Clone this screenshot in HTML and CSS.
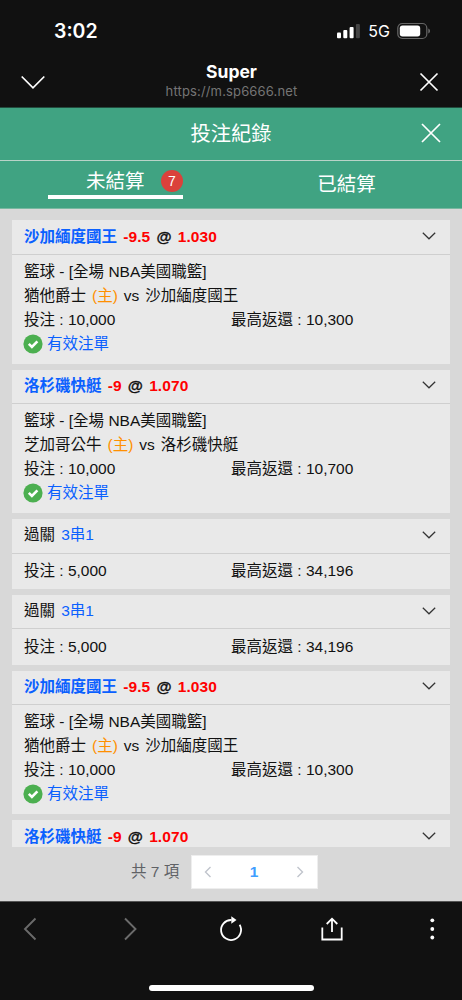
FILE: index.html
```html
<!DOCTYPE html>
<html lang="zh-Hant">
<head>
<meta charset="utf-8">
<title>投注紀錄</title>
<link rel="stylesheet" href="styles.css">
</head>
<body>
<svg class="defs" width="0" height="0">
  <symbol id="chev" viewBox="0 0 14 8"><path d="M.8.8 7 6.8 13.2.8" fill="none" stroke="#333" stroke-width="1.2"/></symbol>
  <symbol id="check" viewBox="0 0 20 20"><circle cx="10" cy="10" r="9.6" fill="#4caf50"/><path d="M5.8 9.9 8.9 13 14.4 7.4" fill="none" stroke="#fff" stroke-width="2.6"/></symbol>
</svg>
<div class="phone">
  <div class="status">
    <span class="clock">3:02</span>
    <div class="signals">
      <svg width="24" height="16" viewBox="0 0 24 16"><g fill="#fff"><rect x="0" y="9.5" width="4" height="5.8" rx="1"/><rect x="6.3" y="7" width="4" height="8.3" rx="1"/><rect x="12.6" y="4" width="4" height="11.3" rx="1"/></g><rect x="18.9" y="1" width="4" height="14.3" rx="1" fill="#444"/></svg>
      <span class="net">5G</span>
      <svg width="34" height="18" viewBox="0 0 34 18"><rect x=".8" y="1.5" width="29" height="15" rx="4.5" fill="none" stroke="#666" stroke-width="1.2"/><rect x="2.8" y="3.5" width="20.4" height="11" rx="2.7" fill="#fff"/><path d="M31.4 6.4v5c2-.7 2-4.3 0-5" fill="#777"/></svg>
    </div>
  </div>
  <div class="browser">
    <svg width="26" height="16" viewBox="0 0 26 16"><path d="M1.7 1.5 13 12.8 24.3 1.5" fill="none" stroke="#fff" stroke-width="1.7"/></svg>
    <div class="site"><div class="site-name">Super</div><div class="url">https://m.sp6666.net</div></div>
    <svg width="20" height="20" viewBox="0 0 20 20"><path d="M1.5 1.5l17 17m0-17-17 17" stroke="#fff" stroke-width="1.7"/></svg>
  </div>
  <div class="title"><h1>投注紀錄</h1><svg width="20" height="20" viewBox="0 0 20 20"><path d="M1 1l18 18M19 1 1 19" stroke="#fff" stroke-width="1.7"/></svg></div>
  <div class="tabs">
    <div class="tab"><div class="active"><span>未結算</span><span class="badge">7</span></div></div>
    <div class="tab settled">已結算</div>
  </div>
  <div class="list">
    <div class="card">
      <div class="head"><div class="pick"><b class="team">沙加緬度國王</b><b class="odds">-9.5</b><b class="at">@</b><b class="odds">1.030</b></div><svg class="chev"><use href="#chev"/></svg></div>
      <div class="body"><div>籃球 - [全場 NBA美國職籃]</div><div class="match"><span>猶他爵士</span><span class="home">(主)</span><span>vs</span><span>沙加緬度國王</span></div><div class="money"><span>投注 : 10,000</span><span>最高返還 : 10,300</span></div><div class="valid"><svg class="check"><use href="#check"/></svg>有效注單</div></div>
    </div>
    <div class="card">
      <div class="head"><div class="pick"><b class="team">洛杉磯快艇</b><b class="odds">-9</b><b class="at">@</b><b class="odds">1.070</b></div><svg class="chev"><use href="#chev"/></svg></div>
      <div class="body"><div>籃球 - [全場 NBA美國職籃]</div><div class="match"><span>芝加哥公牛</span><span class="home">(主)</span><span>vs</span><span>洛杉磯快艇</span></div><div class="money"><span>投注 : 10,000</span><span>最高返還 : 10,700</span></div><div class="valid"><svg class="check"><use href="#check"/></svg>有效注單</div></div>
    </div>
    <div class="card parlay">
      <div class="head"><div class="pick"><span>過關</span><span class="combo">3串1</span></div><svg class="chev"><use href="#chev"/></svg></div>
      <div class="body"><div class="money"><span>投注 : 5,000</span><span>最高返還 : 34,196</span></div></div>
    </div>
    <div class="card parlay">
      <div class="head"><div class="pick"><span>過關</span><span class="combo">3串1</span></div><svg class="chev"><use href="#chev"/></svg></div>
      <div class="body"><div class="money"><span>投注 : 5,000</span><span>最高返還 : 34,196</span></div></div>
    </div>
    <div class="card">
      <div class="head"><div class="pick"><b class="team">沙加緬度國王</b><b class="odds">-9.5</b><b class="at">@</b><b class="odds">1.030</b></div><svg class="chev"><use href="#chev"/></svg></div>
      <div class="body"><div>籃球 - [全場 NBA美國職籃]</div><div class="match"><span>猶他爵士</span><span class="home">(主)</span><span>vs</span><span>沙加緬度國王</span></div><div class="money"><span>投注 : 10,000</span><span>最高返還 : 10,300</span></div><div class="valid"><svg class="check"><use href="#check"/></svg>有效注單</div></div>
    </div>
    <div class="card last">
      <div class="head"><div class="pick"><b class="team">洛杉磯快艇</b><b class="odds">-9</b><b class="at">@</b><b class="odds">1.070</b></div><svg class="chev"><use href="#chev"/></svg></div>
    </div>
  </div>
  <div class="pager">
    <span class="total">共 7 項</span>
    <div class="pages">
      <svg width="8" height="12" viewBox="0 0 8 12"><path d="M6.5 1 1.5 6l5 5" fill="none" stroke="#c0c4cc" stroke-width="1.4"/></svg>
      <b>1</b>
      <svg width="8" height="12" viewBox="0 0 8 12"><path d="M1.5 1l5 5-5 5" fill="none" stroke="#c0c4cc" stroke-width="1.4"/></svg>
    </div>
  </div>
  <div class="toolbar">
    <div class="tools">
      <svg width="26" height="26" viewBox="0 0 26 26"><path d="M18.5 2.5 8 13l10.5 10.5" fill="none" stroke="#6b6b6b" stroke-width="1.9"/></svg>
      <svg width="26" height="26" viewBox="0 0 26 26"><path d="M7 2.500 17.500 13 7 23.500" fill="none" stroke="#6b6b6b" stroke-width="1.9"/></svg>
      <svg width="26" height="26" viewBox="0 0 26 26"><path d="M13.500 4A10 10 0 1 0 21.600 8.800" fill="none" stroke="#fff" stroke-width="1.800"/><path d="M13.300.200v7.600L18.500 4z" fill="#fff"/></svg>
      <svg width="26" height="26" viewBox="0 0 26 26"><path d="M3.300 11.500v12h19.400v-12M13 16V3M7.700 8 13 2.700 18.300 8" fill="none" stroke="#fff" stroke-width="1.800"/></svg>
      <svg width="26" height="26" viewBox="0 0 26 26"><g fill="#fff"><circle cx="13.300" cy="4.300" r="1.900"/><circle cx="13.300" cy="13" r="1.900"/><circle cx="13.300" cy="21.500" r="1.900"/></g></svg>
    </div>
    <div class="home-bar"></div>
  </div>
</div>
</body>
</html>
```
FILE: styles.css
```css
* { box-sizing: border-box; }
body { margin: 0; background: #111; font: 15.5px/24px "Liberation Sans", "Noto Sans CJK TC", sans-serif; color: #111; }
.defs { position: absolute; }
svg { display: block; flex: none; }
.phone { width: 462px; height: 1000px; display: flex; flex-direction: column; overflow: hidden; white-space: nowrap; }
.status { height: 60px; padding: 7px 31px 0 54px; display: flex; justify-content: space-between; align-items: center; color: #fff; font-family: Inter, sans-serif; }
.clock { font-size: 19.5px; font-weight: 600; padding-bottom: 5px; }
.signals { display: flex; align-items: center; padding-bottom: 6px; }
.net { font-size: 16px; margin: 0 7px 0 7px; }
.browser { height: 48px; padding: 0 23px 4px 20px; display: flex; justify-content: space-between; align-items: center; color: #fff; font-family: Inter, sans-serif; border-bottom: 1px solid #224c3e; }
.site { text-align: center; padding: 0 2px 3px 0; }
.site-name { font-size: 17.5px; font-weight: 700; line-height: 22px; }
.url { font-size: 13px; line-height: 17px; color: #757575; letter-spacing: .15px; }
.browser > svg:first-child { margin-top: 2px; }
.browser > svg:last-child { margin-top: 0; }
.title { height: 53px; background: #40a382; border-bottom: 1px solid #b9d3c8; display: grid; grid-template-columns: 1fr 50px; align-items: center; color: #fff; flex: none; }
.title h1 { margin: 0 0 0 50px; font-size: 20.3px; font-weight: 400; text-align: center; }
.title svg { margin-left: 9px; margin-top: -2px; }
.tabs { height: 48px; background: #40a382; border-bottom: 1px solid #79b8a1; display: grid; grid-template-columns: 1fr 1fr; color: #fff; font-size: 19.5px; flex: none; }
.tab { display: flex; justify-content: center; }
.active { width: 135px; height: 38px; padding-left: 38px; border-bottom: 4px solid #fff; display: flex; justify-content: space-between; align-items: center; }
.active > span:first-child { margin-top: 6px; }
.badge { width: 22px; height: 22px; border-radius: 50%; background: #db413b; font-size: 14px; line-height: 22px; text-align: center; margin-top: 6px; }
.settled { line-height: 46px; }
.list { height: 638px; flex: none; overflow: hidden; background: #d8d8d8; padding: 11px 12px 0; display: flex; flex-direction: column; gap: 6px; }
.card { height: 143.5px; flex: none; background: #e9e9e9; }
.parlay { height: 69.75px; }
.head { height: 34.5px; border-bottom: 1px solid #cfcfcf; padding: 0 14px 0 12px; display: flex; align-items: center; justify-content: space-between; }
.pick { display: flex; gap: 6.2px; }
.parlay .pick { margin-top: -1px; }
.match { display: flex; gap: 6px; }
.team, .combo, .valid { color: #0a60ff; }
.odds { color: #f00; letter-spacing: .08px; }
.at { -webkit-text-stroke: .3px #111; }
.home { color: #ff9000; }
.chev { width: 14px; height: 8px; margin-top: -2px; }
.body { padding: 5.4px 12px 0; }
.body > div { height: 24px; }
.money { display: grid; grid-template-columns: 207px 1fr; }
.valid { display: flex; gap: 4px; align-items: center; }
.check { width: 20px; height: 20px; margin-left: -1px; }
.last { height: 34.5px; }
.pager { height: 54px; flex: none; background: #d8d8d8; display: flex; align-items: center; padding: 0 144px 4px 131px; justify-content: space-between; }
.total { color: #606266; }
.pages { width: 127px; height: 34px; border: 1px solid #eee; background: #fff; display: flex; align-items: center; justify-content: space-between; padding: 0 13px 0 12px; color: #409eff; }
.toolbar { height: 99px; border-top: 1px solid #555; flex: none; background: #111; padding: 14px 17px 0; }
.tools { display: flex; justify-content: space-between; }
.home-bar { width: 165px; height: 6px; border-radius: 3px; background: #fff; margin: 43px auto 0; }
```
